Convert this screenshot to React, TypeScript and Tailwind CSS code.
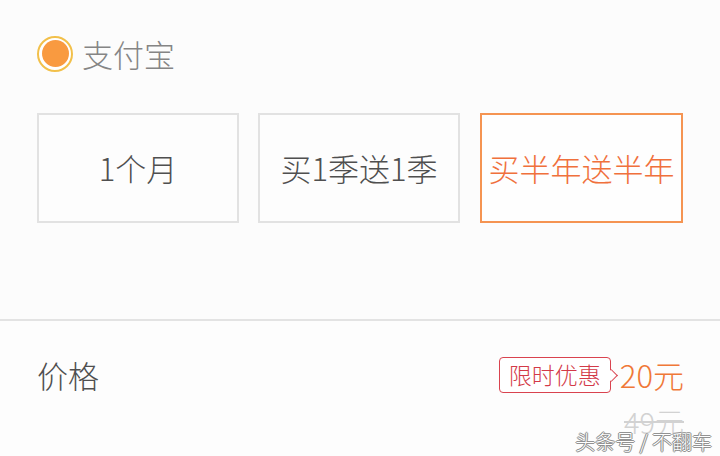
import React from "react";

const font = { fontFamily: '"Noto Sans CJK SC", "Noto Sans", sans-serif' };

export default function App() {
  return (
    <div
      className="w-[720px] h-[456px] bg-[#fcfcfc] overflow-hidden relative flex flex-col font-light"
      style={font}
    >
      <div className="h-[319px] flex flex-col px-[37px] pt-[35px]">
        <div className="flex items-center h-[37px]">
          <div className="w-[36px] h-[36px] rounded-full border-2 border-[#f2c04a] bg-white flex items-center justify-center">
            <div className="w-[27px] h-[27px] rounded-full bg-[#f99a40]" />
          </div>
          <span className="ml-[9px] text-[31px] leading-none text-[#858585]">支付宝</span>
        </div>
        <div className="flex mt-[41px] gap-[19px]">
          <div className="w-[203px] h-[110px] border-2 border-[#e2e2e2] flex items-center justify-center text-[31px] text-[#4f4f4f] bg-[#fdfdfd]">
            1个月
          </div>
          <div className="w-[203px] h-[110px] border-2 border-[#e2e2e2] flex items-center justify-center text-[31px] text-[#4f4f4f] bg-[#fdfdfd]">
            买1季送1季
          </div>
          <div className="w-[204px] h-[110px] ml-px border-2 border-[#f59452] flex items-center justify-center text-[31px] text-[#f0703c] bg-[#fefefe]">
            买半年送半年
          </div>
        </div>
      </div>
      <div className="h-[2px] bg-[#e3e3e3]" />
      <div className="flex-1 bg-[#fdfdfd] relative px-[37px]">
        <div className="flex items-center justify-between h-[37px] mt-[35px]">
          <span className="text-[31px] leading-none text-[#4f4f4f]">价格</span>
          <div className="flex items-center mr-[-1px]">
            <div className="relative h-[36px] px-[9px] border-[1.5px] border-[#d9434f] rounded-[4px] flex items-center text-[23px] leading-none text-[#d33a48] bg-white">
              限时优惠
              <span className="absolute right-[-6px] top-[13px] w-[9px] h-[9px] bg-white border-t-[1.5px] border-r-[1.5px] border-[#d9434f] rotate-45" />
            </div>
            <span className="ml-[9px] text-[31px] leading-none text-[#f07838]">20元</span>
          </div>
        </div>
        <div className="flex justify-end mt-[14px] mr-[-1px]">
          <span className="text-[29px] leading-none text-[#d2d2d2] line-through">49元</span>
        </div>
        <div
          className="absolute right-[8px] bottom-[4px] text-[20px] leading-none text-white"
          style={{
            textShadow:
              "0 0 1px #777, 0 0 1px #777, 1px 0 0 #999, -1px 0 0 #999, 0 1px 0 #999, 0 -1px 0 #999",
          }}
        >
          头条号 / 不翻车
        </div>
      </div>
    </div>
  );
}
